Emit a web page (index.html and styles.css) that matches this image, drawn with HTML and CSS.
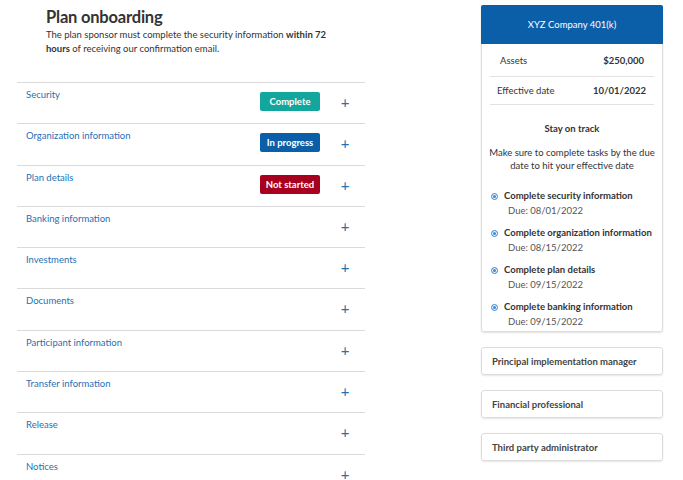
FILE: index.html
```html
<!DOCTYPE html>
<html lang="en">
  <head>
    <meta charset="UTF-8" />
    <meta name="viewport" content="width=device-width, initial-scale=1.0" />
    <title>Plan onboarding</title>
    <link rel="stylesheet" href="styles.css">
  </head>
  <body>
    <div class="page">
      <div class="main">
        <div class="intro">
          <h1>Plan onboarding</h1>
          <p>The plan sponsor must complete the security information <b>within 72 hours</b> of receiving our confirmation email.</p>
        </div>

        <div class="steps">
          <div class="step">
            <span class="step-name">Security</span>
            <div class="step-right">
              <span class="badge complete">Complete</span>
              <span class="plus">+</span>
            </div>
          </div>
          <div class="step">
            <span class="step-name">Organization information</span>
            <div class="step-right">
              <span class="badge progress">In progress</span>
              <span class="plus">+</span>
            </div>
          </div>
          <div class="step">
            <span class="step-name">Plan details</span>
            <div class="step-right">
              <span class="badge not-started">Not started</span>
              <span class="plus">+</span>
            </div>
          </div>
          <div class="step">
            <span class="step-name">Banking information</span>
            <div class="step-right"><span class="plus">+</span></div>
          </div>
          <div class="step">
            <span class="step-name">Investments</span>
            <div class="step-right"><span class="plus">+</span></div>
          </div>
          <div class="step">
            <span class="step-name">Documents</span>
            <div class="step-right"><span class="plus">+</span></div>
          </div>
          <div class="step">
            <span class="step-name">Participant information</span>
            <div class="step-right"><span class="plus">+</span></div>
          </div>
          <div class="step">
            <span class="step-name">Transfer information</span>
            <div class="step-right"><span class="plus">+</span></div>
          </div>
          <div class="step">
            <span class="step-name">Release</span>
            <div class="step-right"><span class="plus">+</span></div>
          </div>
          <div class="step">
            <span class="step-name">Notices</span>
            <div class="step-right"><span class="plus">+</span></div>
          </div>
        </div>
      </div>

      <div class="aside">
        <div class="plan-card">
          <div class="plan-title">XYZ Company 401(k)</div>
          <div class="plan-row first">
            <span>Assets</span>
            <b>$250,000</b>
          </div>
          <div class="plan-row">
            <span>Effective date</span>
            <b>10/01/2022</b>
          </div>
          <div class="track">
            <h2>Stay on track</h2>
            <p>Make sure to complete tasks by the due date to hit your effective date</p>
          </div>
          <ul class="tasks">
            <li>
              <div class="task-name"><span class="dot"></span>Complete security information</div>
              <div class="due">Due: 08/01/2022</div>
            </li>
            <li>
              <div class="task-name"><span class="dot"></span>Complete organization information</div>
              <div class="due">Due: 08/15/2022</div>
            </li>
            <li>
              <div class="task-name"><span class="dot"></span>Complete plan details</div>
              <div class="due">Due: 09/15/2022</div>
            </li>
            <li>
              <div class="task-name"><span class="dot"></span>Complete banking information</div>
              <div class="due">Due: 09/15/2022</div>
            </li>
          </ul>
        </div>

        <div class="contact">Principal implementation manager</div>
        <div class="contact">Financial professional</div>
        <div class="contact">Third party administrator</div>
      </div>
    </div>
  </body>
</html>
```

FILE: styles.css
```css
body {
  margin: 0;
  font-family: Lato, "Noto Sans", sans-serif;
  color: #333;
  background-color: #fff;
}

.page {
  display: flex;
  align-items: flex-start;
  padding-left: 17px;
  gap: 116px;
}

.main {
  width: 348px;
}

.intro {
  padding: 6px 0 0 29px;
  height: 82px;
  box-sizing: border-box;
}

h1 {
  margin: 0;
  font-size: 16.5px;
  font-weight: 700;
  letter-spacing: -0.2px;
  line-height: 22px;
  color: #333;
}

.intro p {
  margin: 0;
  font-size: 9.5px;
  line-height: 14px;
  width: 292px;
}

.step {
  display: flex;
  justify-content: space-between;
  align-items: flex-start;
  box-sizing: border-box;
  height: 41.3px;
  border-top: 1px solid #dadada;
  padding-left: 9px;
}

.step-name {
  margin-top: 6px;
  font-size: 9.5px;
  line-height: 12px;
  color: #1f6fb5;
}

.step-right {
  display: flex;
  align-items: center;
  margin-top: 9px;
  height: 19px;
}

.badge {
  width: 60px;
  height: 19px;
  line-height: 19px;
  text-align: center;
  border-radius: 2px;
  color: #fff;
  font-size: 9.5px;
  font-weight: 700;
}

.badge.complete {
  background-color: #13a69c;
}

.badge.progress {
  background-color: #0b5ea8;
}

.badge.not-started {
  background-color: #a8001f;
}

.plus {
  width: 10px;
  margin: 2px 15px 0 20px;
  text-align: center;
  font-size: 15px;
  line-height: 19px;
  color: #2a6fae;
}

.aside {
  width: 182px;
  padding-top: 5px;
}

.plan-card {
  border: 1px solid #dcdcdc;
  border-radius: 3px;
  box-shadow: 0 1px 2px rgba(0, 0, 0, 0.12);
  padding-bottom: 3px;
}

.plan-title {
  height: 39px;
  line-height: 39px;
  background-color: #0b5ea8;
  color: #fff;
  text-align: center;
  font-size: 9.5px;
  border-radius: 2px 2px 0 0;
  margin: -1px -1px 0;
}

.plan-row {
  display: flex;
  justify-content: space-between;
  margin: 0 8px;
  padding: 0 8px 0 7px;
  height: 27px;
  line-height: 27px;
  border-bottom: 1px solid #e2e2e2;
  font-size: 9.5px;
}

.plan-row.first {
  height: 32px;
  line-height: 33px;
  padding: 0 10px 0 10px;
}

.plan-row b {
  font-weight: 700;
}

.track {
  text-align: center;
  padding: 17px 5px 0;
}

.track h2 {
  margin: 0;
  font-size: 9.5px;
  line-height: 14px;
  font-weight: 700;
}

.track p {
  margin: 10px 0 0;
  font-size: 9.5px;
  line-height: 13px;
}

.tasks {
  list-style: none;
  margin: 17px 0 0;
  padding: 0 0 0 9px;
}

.tasks li {
  height: 37px;
}

.tasks li:last-child {
  height: 28px;
}

.task-name {
  display: flex;
  align-items: center;
  font-size: 9.5px;
  line-height: 14px;
  font-weight: 700;
}

.dot {
  width: 5px;
  height: 5px;
  margin-right: 6px;
  border: 1px solid #5b9bd5;
  border-radius: 50%;
  background-color: #3a86d0;
  box-shadow: inset 0 0 0 1px #fff;
}

.due {
  margin: 2px 0 0 17px;
  font-size: 9.5px;
  line-height: 12px;
  color: #555;
}

.contact {
  margin-top: 15px;
  height: 26px;
  line-height: 27px;
  padding-left: 10px;
  border: 1px solid #dcdcdc;
  border-radius: 3px;
  box-shadow: 0 1px 2px rgba(0, 0, 0, 0.1);
  font-size: 9.5px;
  font-weight: 700;
  color: #444;
}
```
